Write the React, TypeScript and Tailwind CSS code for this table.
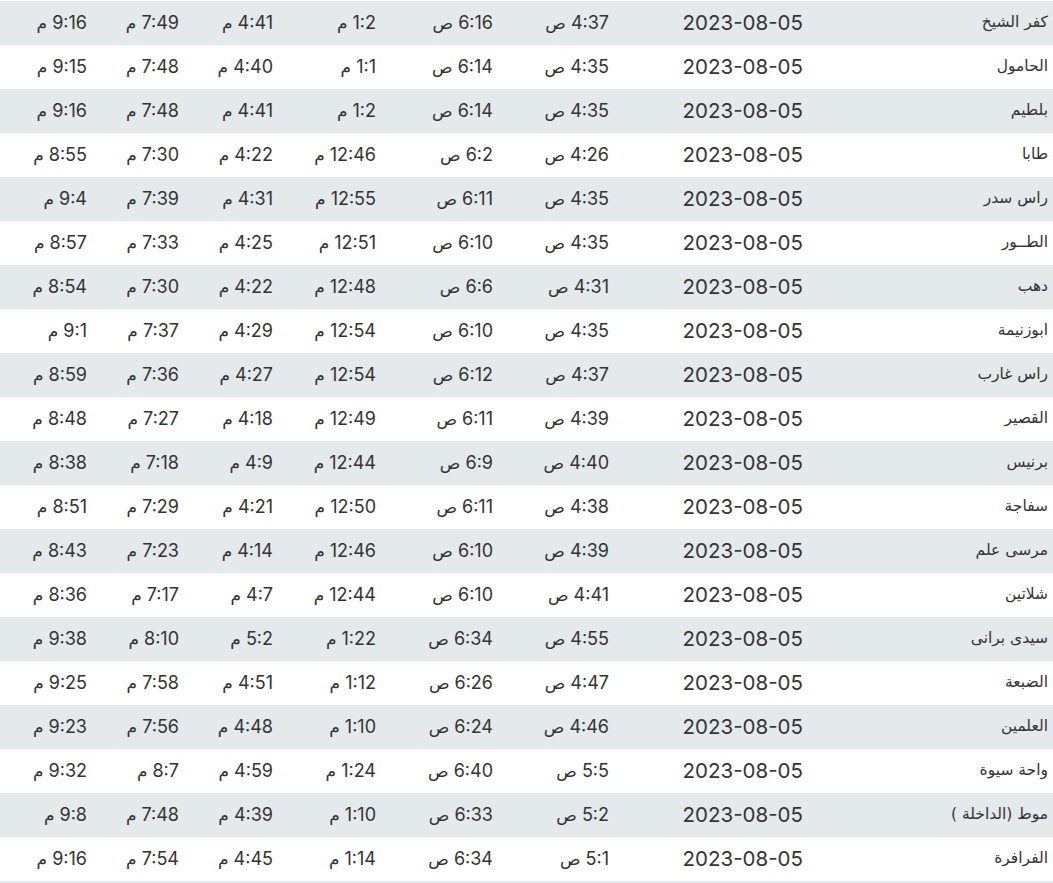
const rows: string[][] = [
  ["كفر الشيخ", "4:37", "6:16", "1:2", "4:41", "7:49", "9:16"],
  ["الحامول", "4:35", "6:14", "1:1", "4:40", "7:48", "9:15"],
  ["بلطيم", "4:35", "6:14", "1:2", "4:41", "7:48", "9:16"],
  ["طابا", "4:26", "6:2", "12:46", "4:22", "7:30", "8:55"],
  ["راس سدر", "4:35", "6:11", "12:55", "4:31", "7:39", "9:4"],
  ["الطــور", "4:35", "6:10", "12:51", "4:25", "7:33", "8:57"],
  ["دهب", "4:31", "6:6", "12:48", "4:22", "7:30", "8:54"],
  ["ابوزنيمة", "4:35", "6:10", "12:54", "4:29", "7:37", "9:1"],
  ["راس غارب", "4:37", "6:12", "12:54", "4:27", "7:36", "8:59"],
  ["القصير", "4:39", "6:11", "12:49", "4:18", "7:27", "8:48"],
  ["برنيس", "4:40", "6:9", "12:44", "4:9", "7:18", "8:38"],
  ["سفاجة", "4:38", "6:11", "12:50", "4:21", "7:29", "8:51"],
  ["مرسى علم", "4:39", "6:10", "12:46", "4:14", "7:23", "8:43"],
  ["شلاتين", "4:41", "6:10", "12:44", "4:7", "7:17", "8:36"],
  ["سيدى برانى", "4:55", "6:34", "1:22", "5:2", "8:10", "9:38"],
  ["الضبعة", "4:47", "6:26", "1:12", "4:51", "7:58", "9:25"],
  ["العلمين", "4:46", "6:24", "1:10", "4:48", "7:56", "9:23"],
  ["واحة سيوة", "5:5", "6:40", "1:24", "4:59", "8:7", "9:32"],
  ["موط (الداخلة )", "5:2", "6:33", "1:10", "4:39", "7:48", "9:8"],
  ["الفرافرة", "5:1", "6:34", "1:14", "4:45", "7:54", "9:16"],
];

const suffix = ["ص", "ص", "م", "م", "م", "م"];

export default function App() {
  return (
    <div className="bg-white min-h-screen pt-px overflow-hidden">
      <table dir="rtl" className="w-[1053px] table-fixed border-collapse text-[#333]">
        <colgroup>
          <col className="w-[245px]" />
          <col className="w-[194px]" />
          <col className="w-[116px]" />
          <col className="w-[117px]" />
          <col className="w-[103px]" />
          <col className="w-[94px]" />
          <col className="w-[92px]" />
          <col className="w-[92px]" />
        </colgroup>
        <tbody>
          {rows.map((r, i) => (
            <tr key={i} className={i % 2 === 0 ? "h-[44px] bg-[#e4e9ec]" : "h-[44px] bg-white"}>
              <td className="pr-[5px] text-right text-[15.5px] font-['DejaVu_Sans',sans-serif] whitespace-nowrap">
                {r[0]}
              </td>
              <td className="pr-[5px] text-right text-[20.5px] font-['Inter','DejaVu_Sans',sans-serif] whitespace-nowrap">
                2023-08-05
              </td>
              {r.slice(1).map((t, j) => (
                <td
                  key={j}
                  className="pr-[5px] text-right text-[18px] font-['Inter','DejaVu_Sans',sans-serif] whitespace-nowrap"
                >
                  {t} <span className="text-[17px]">{suffix[j]}</span>
                </td>
              ))}
            </tr>
          ))}
          <tr className="h-[44px] bg-[#e4e9ec]">
            <td colSpan={8} />
          </tr>
        </tbody>
      </table>
    </div>
  );
}
